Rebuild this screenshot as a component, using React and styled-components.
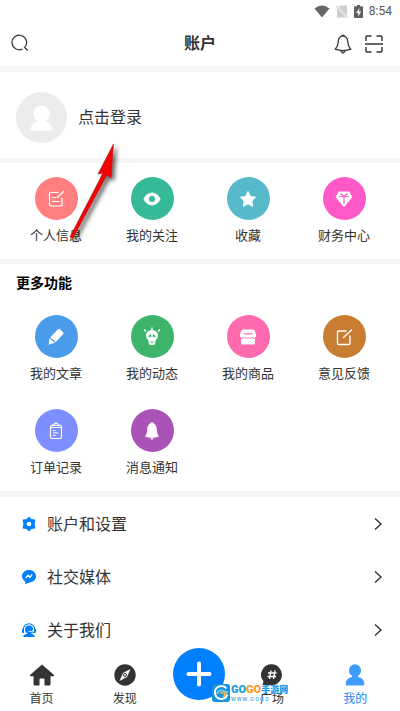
import React from 'react';
import styled, { createGlobalStyle } from 'styled-components';

const GlobalStyle = createGlobalStyle`
  * {
    box-sizing: border-box;
  }

  body {
    margin: 0;
    background: #fff;
    color: #333;
    font-family: "Noto Sans CJK SC", "Liberation Sans", sans-serif;
  }

  button {
    border: none;
    background: none;
    padding: 0;
    margin: 0;
    color: inherit;
    font: inherit;
    cursor: pointer;
  }

  a {
    color: inherit;
    text-decoration: none;
  }

  svg {
    display: block;
    flex-shrink: 0;
  }
`;

const Page = styled.div`
  position: relative;
  display: flex;
  flex-direction: column;
  min-height: 100vh;
`;

const StatusBar = styled.div`
  display: flex;
  align-items: center;
  justify-content: flex-end;
  height: 22px;
  padding: 0 8px 0 0;
  color: #555;
`;

const Clock = styled.span`
  margin-left: 6px;
  font-family: Roboto, sans-serif;
  font-size: 12px;
  line-height: 22px;
`;

const StatusIcons = styled.div`
  display: flex;
  align-items: center;
  gap: 6px;
`;

const Header = styled.header`
  display: grid;
  grid-template-columns: 1fr auto 1fr;
  align-items: center;
  height: 44px;
  padding: 0 16px 0 11px;
`;

const Title = styled.h1`
  margin: 0;
  padding: 0 0 4px 5px;
  font-size: 16px;
  font-weight: 700;
  line-height: 24px;
`;

const HeaderActions = styled.div`
  display: flex;
  justify-content: flex-end;
  gap: 12px;
`;

const Divider = styled.div`
  height: ${({ $size }) => $size || 5}px;
  background: #f5f5f5;
`;

const ProfileRow = styled.button`
  display: flex;
  align-items: center;
  gap: 11px;
  width: 100%;
  height: 86px;
  padding: 4px 16px 0;
  text-align: left;
`;

const ProfileText = styled.span`
  padding-bottom: 2px;
  font-size: 16px;
  line-height: 24px;
`;

const SectionTitle = styled.h2`
  margin: 0;
  padding: 7px 16px 0;
  color: #000;
  font-size: 14px;
  font-weight: 700;
  line-height: 22px;
`;

const Grid = styled.div`
  display: grid;
  grid-template-columns: repeat(4, 1fr);
  row-gap: 26px;
  padding: ${({ $top }) => $top}px 8px 14px;
`;

const GridItem = styled.button`
  display: flex;
  flex-direction: column;
  align-items: center;
  gap: 5px;
  font-size: 13px;
  line-height: 20px;
`;

const Circle = styled.span`
  display: flex;
  align-items: center;
  justify-content: center;
  width: 43px;
  height: 43px;
  border-radius: 50%;
  background: ${({ $color }) => $color};
`;

const MenuLink = styled.a`
  display: flex;
  align-items: center;
  height: 53px;
  padding: 0 17px 0 21px;
  font-size: 16px;
`;

const MenuLabel = styled.span`
  flex: 1;
  margin-left: 10px;
  padding-bottom: 2px;
`;

const TabBar = styled.nav`
  position: relative;
  display: flex;
  align-items: flex-end;
  height: 55px;
  margin-top: auto;
  padding: 0 3px 3px 0;
`;

const Tab = styled.a`
  display: flex;
  flex: 1;
  flex-direction: column;
  align-items: center;
  gap: 1px;
  color: ${({ $active }) => ($active ? '#1989fa' : '#333')};
  font-size: 12px;
  line-height: 20px;
`;

const AddSlot = styled.div`
  display: flex;
  justify-content: center;
  width: 64px;
  height: 60px;
`;

const AddButton = styled.button`
  display: flex;
  align-items: center;
  justify-content: center;
  width: 52px;
  height: 52px;
  border-radius: 50%;
  background: #0080ff;
`;

const Watermark = styled.div`
  position: absolute;
  bottom: 9px;
  left: 53%;
  display: flex;
  align-items: center;
  gap: 1px;
  pointer-events: none;
`;

const WatermarkText = styled.div`
  display: flex;
  flex-direction: column;
`;

const WatermarkName = styled.span`
  color: #1b9be8;
  font-family: Roboto, "Noto Sans CJK SC", sans-serif;
  font-size: 9px;
  font-weight: 900;
  line-height: 12px;
  white-space: nowrap;
`;

const WatermarkAccent = styled.span`
  color: ${({ $color }) => $color};
  font-size: 11px;
`;

const WatermarkUrl = styled.span`
  color: #4fb2ee;
  font-family: "Liberation Sans", sans-serif;
  font-size: 5px;
  font-weight: 700;
  line-height: 6px;
  letter-spacing: 1px;
`;

const Pointer = styled.svg`
  position: absolute;
  top: 140px;
  left: 62px;
  pointer-events: none;
`;

const WifiIcon = () => (
  <svg width="16" height="13" viewBox="0 0 16 13">
    <path d="M0.500 3.500Q8 -2.500 15.500 3.500L8 12.500Z" fill="#666" />
  </svg>
);

const NoSimIcon = () => (
  <svg width="12" height="13" viewBox="0 0 12 13">
    <path d="M4 0.500H11V10.500L3 2ZM1 3L10 12.500H1Z" fill="#ccc" />
    <path d="M0.500 1L11.500 12.500" stroke="#bbb" strokeWidth="1" />
  </svg>
);

const BatteryIcon = () => (
  <svg width="9" height="13" viewBox="0 0 9 13">
    <path d="M3 0H6V1.300H8Q9 1.300 9 2.300V12Q9 13 8 13H1Q0 13 0 12V2.300Q0 1.300 1 1.300H3Z" fill="#606060" />
    <path d="M5.500 3L2 8H4.200V11.500L7.200 6.500H5Z" fill="#fff" />
  </svg>
);

const SearchIcon = () => (
  <svg width="18" height="18" viewBox="0 0 18 18" fill="none" stroke="#333" strokeWidth="1.200">
    <path d="M11.500 16A7.300 7.300 0 1 1 14 14" />
    <path d="M13 14L17 17.500" />
  </svg>
);

const BellIcon = () => (
  <svg width="18" height="20" viewBox="0 0 18 20" fill="none" stroke="#333" strokeWidth="1.300" strokeLinejoin="round">
    <path d="M9 1.800C5.400 2.200 4.300 5 4.200 8C4.100 11.500 2.800 13.500 1.200 15.200C3.800 16.200 6 16.600 9 16.600S14.200 16.200 16.800 15.200C15.200 13.500 13.900 11.500 13.800 8C13.700 5 12.600 2.200 9 1.800Z" />
    <path d="M7.500 1.300H10.500M6.800 17.200L9 19L11.200 17.200" />
  </svg>
);

const ScanIcon = () => (
  <svg width="20" height="20" viewBox="0 0 20 20" fill="none" stroke="#333" strokeWidth="1.400">
    <path d="M2 7V3Q2 2 3 2H7.500M12.500 2H17Q18 2 18 3V7M18 13V17Q18 18 17 18H12.500M7.500 18H3Q2 18 2 17V13M1 10H19" />
  </svg>
);

const Avatar = () => (
  <svg width="51" height="51" viewBox="0 0 51 51">
    <circle cx="25.500" cy="25.500" r="25.500" fill="#ececec" />
    <ellipse cx="25.500" cy="22" rx="8.300" ry="8.500" fill="#fff" />
    <path d="M14 38.500Q15.500 31 21.500 29.500H29.500Q35.500 31 37 38.500Z" fill="#fff" />
  </svg>
);

const NoteIcon = () => (
  <svg width="18" height="18" viewBox="0 0 18 18" fill="none" stroke="#fff" strokeWidth="1.200" strokeLinecap="round">
    <path d="M11 2.500H3.500Q2.500 2.500 2.500 3.500V15Q2.500 16 3.500 16H14Q15 16 15 15V8M16.500 1.500L10.500 7.500M5.500 7.500H8.500M5.500 11.500H12" />
  </svg>
);

const EyeIcon = () => (
  <svg width="18" height="14" viewBox="0 0 18 14">
    <path d="M0.300 7Q4 0.500 9 0.500T17.700 7Q14 13.500 9 13.500T0.300 7Z" fill="#fff" />
    <circle cx="9" cy="7" r="3" fill="#35b998" />
  </svg>
);

const StarIcon = () => (
  <svg width="18" height="18" viewBox="0 0 18 18">
    <path d="M9 1.500L11.400 6.400L16.500 7.200L12.800 11L13.700 16.300L9 13.900L4.300 16.300L5.200 11L1.500 7.200L6.600 6.400Z" fill="#fff" stroke="#fff" strokeLinejoin="round" />
  </svg>
);

const GemIcon = () => (
  <svg width="18" height="18" viewBox="0 0 18 18">
    <path d="M4 2H14L17 7L9 16.500L1 7Z" fill="#fff" stroke="#fff" strokeLinejoin="round" />
    <path d="M4.500 6.500H13.500M5.500 3.500L9 6.500L12.500 3.500M9 6.500V14" stroke="#ff59c7" strokeWidth="1.200" fill="none" />
  </svg>
);

const PencilIcon = () => (
  <svg width="18" height="18" viewBox="0 0 18 18">
    <path d="M11.200 1.200Q12 0.500 12.800 1.200L16.300 4.500Q17 5.300 16.300 6.100L8.700 14.200L3.300 9.200Z" fill="#fff" />
    <path d="M2.600 10L7.800 14.800L1.600 16.700Z" fill="#fff" />
    <path d="M3.800 10.600L7 13.500" stroke="#4a9bea" strokeWidth="1" />
  </svg>
);

const BulbIcon = () => (
  <svg width="18" height="19" viewBox="0 0 18 19">
    <path d="M9 3C12.700 3 15 5.500 15 8.500C15 11.500 12.500 12.500 12.300 14.500V16Q12.300 18 10.500 18H7.500Q5.700 18 5.700 16V14.500C5.500 12.500 3 11.500 3 8.500C3 5.500 5.300 3 9 3Z" fill="#fff" />
    <path d="M9 0.500V3M1 2.500L3 4.500M17 2.500L15 4.500" stroke="#fff" strokeWidth="1.300" />
    <path d="M6 10L7.200 7.800L8.200 10M9.800 10L10.800 7.800L12 10M7.500 15H10.500" stroke="#3cb56b" strokeWidth="1.200" fill="none" />
  </svg>
);

const ShopIcon = () => (
  <svg width="18" height="16" viewBox="0 0 18 16">
    <path d="M4 0.500H14Q15.500 0.500 16 2L17.300 7Q17 9 15 9H3Q1 9 0.700 7L2 2Q2.500 0.500 4 0.500ZM2 9H16V14Q16 15.500 14.500 15.500H3.500Q2 15.500 2 14Z" fill="#fff" />
    <path d="M5 4.800H13.500" stroke="#ff69ad" strokeWidth="1.200" />
    <path d="M1 8.500Q3.500 10.500 5.500 8.500Q7.500 10.500 9.500 8.500Q11.500 10.500 13 8.500Q15 10.500 17 8.500" stroke="#ff69ad" strokeWidth="0.900" fill="none" />
  </svg>
);

const ComposeIcon = () => (
  <svg width="18" height="18" viewBox="0 0 18 18" fill="none" stroke="#fff" strokeWidth="1.400" strokeLinecap="round">
    <path d="M11 3H3.500Q2.500 3 2.500 4V15.500Q2.500 16.500 3.500 16.500H14Q15 16.500 15 15.500V8M16.500 2L8.500 9.500" />
  </svg>
);

const ClipboardIcon = () => (
  <svg width="14" height="18" viewBox="0 0 14 18" fill="none" stroke="#fff" strokeWidth="1.200">
    <rect x="1.500" y="3.500" width="11" height="13" rx="1.500" />
    <path d="M3.500 3.500Q3.500 2 5.500 2Q7 0.500 8.500 2Q10.500 2 10.500 3.500M2 5.500H12M4 8.500H6.500M4 11H9.500M4 13.500H6.500" />
  </svg>
);

const SolidBellIcon = () => (
  <svg width="16" height="18" viewBox="0 0 16 18" fill="#fff">
    <path d="M8 1C4.500 1.500 3.300 4.500 3.200 7.500C3.100 11 2.200 12.800 1 14.500Q4 15.800 8 15.800T15 14.500C13.800 12.800 12.900 11 12.800 7.500C12.700 4.500 11.500 1.500 8 1Z" />
    <path d="M6.500 0.500H9.500V2H6.500ZM6 16.200L8 18L10 16.200Z" />
  </svg>
);

const GearIcon = () => (
  <svg width="16" height="16" viewBox="0 0 16 16">
    <path d="M8 1.300L10.200 3.700L13.800 4L13 8L13.800 12L10.200 12.300L8 14.700L5.800 12.300L2.200 12L3 8L2.200 4L5.800 3.700Z" fill="#0080ff" stroke="#0080ff" strokeWidth="1.200" strokeLinejoin="round" />
    <circle cx="8" cy="8" r="2.300" fill="#fff" />
  </svg>
);

const MessengerIcon = () => (
  <svg width="16" height="16" viewBox="0 0 16 16">
    <path d="M8 1C12 1 15 3.700 15 7.300S12 13.300 8.300 13.500L4.300 15.200V12.500C2.300 11.500 1 9.500 1 7.300C1 3.700 4 1 8 1Z" fill="#0080ff" />
    <path d="M4.800 9.200L7 6L9 8.500L11.200 5.300" fill="none" stroke="#fff" strokeWidth="1.300" strokeLinejoin="bevel" />
  </svg>
);

const SupportIcon = () => (
  <svg width="16" height="16" viewBox="0 0 16 16">
    <path d="M2.300 9V7.500A5.700 5.700 0 0 1 13.700 7.500V9" fill="none" stroke="#0080ff" strokeWidth="1.100" />
    <path d="M1 7H3V11H2Q1 11 1 10ZM13 7H15V10Q15 11 14 11H13Z" fill="#0080ff" />
    <circle cx="8" cy="7.500" r="4" fill="#0080ff" />
    <path d="M6 10H10V12Q13.500 12 13.800 15H2.200Q2.500 12 6 12Z" fill="#0080ff" />
    <path d="M13.500 10Q12 11.500 9 11" fill="none" stroke="#0080ff" />
    <path d="M7.500 9.500Q10.500 10.500 12 8" fill="none" stroke="#fff" strokeWidth="0.800" />
  </svg>
);

const ChevronIcon = () => (
  <svg width="10" height="14" viewBox="0 0 10 14" fill="none" stroke="#333" strokeWidth="1.400">
    <path d="M2 1.500L8 7L2 12.500" />
  </svg>
);

const HomeIcon = () => (
  <svg width="26" height="24" viewBox="0 0 26 24">
    <path d="M13 1.500L25 12Q25.500 13.200 24 13.200H21.500V21Q21.500 22.500 20 22.500H15.500V16.500Q15.500 15.500 14.500 15.500H11.500Q10.500 15.500 10.500 16.500V22.500H6Q4.500 22.500 4.500 21V13.200H2Q0.500 13.200 1 12Z" fill="#333" />
  </svg>
);

const CompassIcon = () => (
  <svg width="24" height="24" viewBox="0 0 24 24">
    <circle cx="12" cy="12" r="10.700" fill="#333" />
    <path d="M17.500 6L14 14L6.500 18L10 10Z" fill="#fff" />
    <circle cx="12" cy="12" r="1.500" fill="#fff" stroke="#333" />
  </svg>
);

const TopicIcon = () => (
  <svg width="24" height="24" viewBox="0 0 24 24">
    <path d="M12 1.300A10.500 10.500 0 1 1 9 22H2.500L3.500 18.500A10.500 10.500 0 0 1 12 1.300Z" fill="#333" />
    <path d="M11 7.500L9.500 16M15 7.500L13.500 16M8 10H16.500M7.500 13.500H16" stroke="#fff" strokeWidth="1.400" />
  </svg>
);

const UserIcon = () => (
  <svg width="24" height="24" viewBox="0 0 24 24" fill="#409bff">
    <ellipse cx="12" cy="7.500" rx="6" ry="6.200" />
    <path d="M9 11H15V14Q21 15 21.300 20.500V21Q21.300 22.500 20 22.500H4Q2.700 22.500 2.700 21V20.500Q3 15 9 14Z" />
  </svg>
);

const PlusIcon = () => (
  <svg width="26" height="26" viewBox="0 0 26 26" stroke="#fff" strokeWidth="4" strokeLinecap="round">
    <path d="M13 2.500V23.500M2.500 13H23.500" />
  </svg>
);

const GogoLogo = () => (
  <svg width="18" height="18" viewBox="0 0 18 18">
    <rect x="0" y="0" width="18" height="18" rx="3" fill="#1493df" />
    <path d="M14.500 4.500A6.500 6.500 0 1 0 15.500 10.500" fill="none" stroke="#fff" strokeWidth="2" />
    <path d="M5 10Q6 6 10 6.500L15 8L12 12" fill="none" stroke="#65c9fa" strokeWidth="2" />
    <path d="M8 9H14L11.500 13" fill="none" stroke="#ffb32d" strokeWidth="1.600" />
  </svg>
);

const shortcuts = [
  { label: '个人信息', color: '#ff7f80', icon: NoteIcon },
  { label: '我的关注', color: '#35b998', icon: EyeIcon },
  { label: '收藏', color: '#56bacb', icon: StarIcon },
  { label: '财务中心', color: '#ff59c7', icon: GemIcon },
];

const features = [
  { label: '我的文章', color: '#4a9bea', icon: PencilIcon },
  { label: '我的动态', color: '#3cb56b', icon: BulbIcon },
  { label: '我的商品', color: '#ff69ad', icon: ShopIcon },
  { label: '意见反馈', color: '#c87d32', icon: ComposeIcon },
  { label: '订单记录', color: '#7d8fff', icon: ClipboardIcon },
  { label: '消息通知', color: '#aa52b8', icon: SolidBellIcon },
];

const menu = [
  { label: '账户和设置', icon: GearIcon },
  { label: '社交媒体', icon: MessengerIcon },
  { label: '关于我们', icon: SupportIcon },
];

const IconGrid = ({ items, top }) => (
  <Grid $top={top}>
    {items.map(({ label, color, icon: Icon }) => (
      <GridItem key={label} type="button">
        <Circle $color={color}><Icon /></Circle>
        {label}
      </GridItem>
    ))}
  </Grid>
);

const App = () => (
  <>
    <GlobalStyle />
    <Page>
      <StatusBar>
        <StatusIcons>
          <WifiIcon />
          <NoSimIcon />
          <BatteryIcon />
        </StatusIcons>
        <Clock>8:54</Clock>
      </StatusBar>

      <Header>
        <div>
          <button type="button" aria-label="搜索"><SearchIcon /></button>
        </div>
        <Title>账户</Title>
        <HeaderActions>
          <button type="button" aria-label="通知"><BellIcon /></button>
          <button type="button" aria-label="扫一扫"><ScanIcon /></button>
        </HeaderActions>
      </Header>

      <Divider $size={6} />
      <ProfileRow type="button">
        <Avatar />
        <ProfileText>点击登录</ProfileText>
      </ProfileRow>

      <Divider />
      <IconGrid items={shortcuts} top={14} />

      <Divider />
      <SectionTitle>更多功能</SectionTitle>
      <IconGrid items={features} top={22} />

      <Divider $size={6} />
      {menu.map(({ label, icon: Icon }) => (
        <MenuLink key={label} href="#">
          <Icon />
          <MenuLabel>{label}</MenuLabel>
          <ChevronIcon />
        </MenuLink>
      ))}

      <TabBar>
        <Tab href="#"><HomeIcon />首页</Tab>
        <Tab href="#"><CompassIcon />发现</Tab>
        <AddSlot>
          <AddButton type="button" aria-label="发布"><PlusIcon /></AddButton>
        </AddSlot>
        <Tab href="#"><TopicIcon />广场</Tab>
        <Tab href="#" $active><UserIcon />我的</Tab>
        <Watermark>
          <GogoLogo />
          <WatermarkText>
            <WatermarkName>
              <WatermarkAccent $color="#1b9be8">GO</WatermarkAccent>
              <WatermarkAccent $color="#ff9a1f">GO</WatermarkAccent>
              手游网
            </WatermarkName>
            <WatermarkUrl>WWW.GOGO</WatermarkUrl>
          </WatermarkText>
        </Watermark>
      </TabBar>

      <Pointer width="64" height="104" viewBox="0 0 64 104" aria-hidden="true">
        <defs>
          <filter id="pointerShadow" x="-30%" y="-30%" width="160%" height="160%">
            <feDropShadow dx="3" dy="3" stdDeviation="2" floodColor="#000" floodOpacity="0.6" />
          </filter>
        </defs>
        <path
          d="M51.500 4L36 34L41 33L8 97L11 98L45 35L49 38Z"
          fill="#f80000"
          stroke="#8c2020"
          strokeWidth="0.600"
          filter="url(#pointerShadow)"
        />
      </Pointer>
    </Page>
  </>
);

export default App;
